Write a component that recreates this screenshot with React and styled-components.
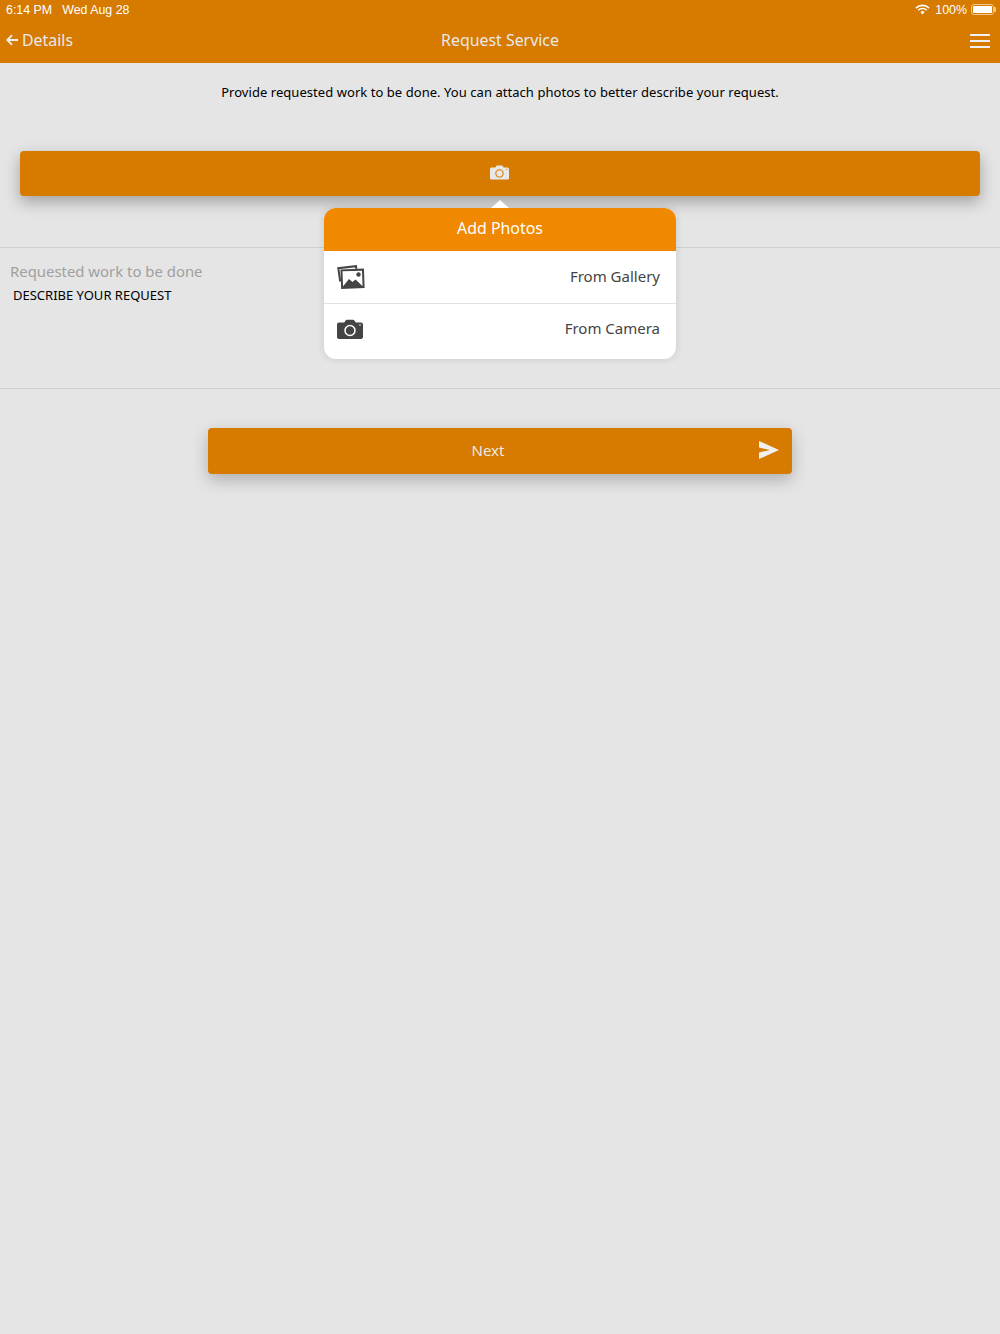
import React from 'react';
import styled, { createGlobalStyle } from 'styled-components';

const GlobalStyle = createGlobalStyle`
  html, body {
    margin: 0;
    padding: 0;
    background: #e5e5e5;
  }
  body {
    font-family: "Noto Sans", "Open Sans", sans-serif;
  }
`;

const CameraIcon = ({ size = 26, body = '#444', hole = '#fff' }) => (
  <svg width={size} height={size * 0.77} viewBox="0 0 26 20">
    <path
      d="M2 3.5h5.2L8.8 1.2C9 .9 9.300.7 9.700.7h6.600c.4 0 .7.2.9.5l1.600 2.300H24c1.100 0 2 .9 2 2V18c0 1.100-.9 2-2 2H2c-1.100 0-2-.9-2-2V5.500c0-1.100.9-2 2-2z"
      fill={body}
    />
    <circle cx="13" cy="11.500" r="5" fill="none" stroke={hole} strokeWidth="1.500" />
    <circle cx="23" cy="6" r="0.800" fill={hole} />
  </svg>
);

const GalleryIcon = () => (
  <svg width="28" height="24" viewBox="0 0 28 24">
    <path d="M3.200 16.500 1.300 3.200 19 1.200l.4 2.600" fill="none" stroke="#444" strokeWidth="2" />
    <rect x="4.800" y="5" width="21.500" height="17.500" fill="#fff" stroke="#444" strokeWidth="2" transform="rotate(-2 15 14)" />
    <path d="M5.500 22l6.500-8 3.500 3 3-2.500 8 7.500z" fill="#444" />
    <circle cx="21.500" cy="9.500" r="2.200" fill="#444" />
  </svg>
);

const App = () => (
  <Page>
    <GlobalStyle />
    <Header>
      <StatusBar>
        <StatusGroup>
          <span>6:14 PM</span>
          <span>Wed Aug 28</span>
        </StatusGroup>
        <BatteryGroup>
          <svg width="15" height="11" viewBox="0 0 16 11">
            <path d="M1 4a10 10 0 0 1 14 0" fill="none" stroke="#fff" strokeWidth="1.700" />
            <path d="M3.500 6.300a6.500 6.500 0 0 1 9 0" fill="none" stroke="#fff" strokeWidth="1.700" />
            <path d="M5.700 8.200a3.300 3.300 0 0 1 4.600 0L8 10.800z" fill="#fff" />
          </svg>
          <span>100%</span>
          <Battery><BatteryFill /></Battery>
        </BatteryGroup>
      </StatusBar>
      <NavBar>
        <BackLink>
          <svg width="12" height="12" viewBox="0 0 12 12">
            <path d="M6 1.200 1.300 6 6 10.800M1.500 6H12" fill="none" stroke="#f0f0f0" strokeWidth="1.800" />
          </svg>
          Details
        </BackLink>
        <NavTitle>Request Service</NavTitle>
        <MenuButton>
          <span /><span /><span />
        </MenuButton>
      </NavBar>
    </Header>

    <Intro>Provide requested work to be done. You can attach photos to better describe your request.</Intro>

    <PhotoSection>
      <PhotoButton>
        <CameraBump>
          <CameraIcon size={19} body="#e8e8e8" hole="#d67a00" />
        </CameraBump>
      </PhotoButton>
      <Popover>
        <PopoverArrow />
        <PopoverTitle>Add Photos</PopoverTitle>
        <PopoverRow>
          <GalleryIcon />
          <RowLabel>From Gallery</RowLabel>
        </PopoverRow>
        <PopoverRow $last>
          <CameraIcon />
          <RowLabel>From Camera</RowLabel>
        </PopoverRow>
      </Popover>
    </PhotoSection>

    <Field>
      <FieldLabel>Requested work to be done</FieldLabel>
      <FieldValue>DESCRIBE YOUR REQUEST</FieldValue>
    </Field>

    <NextButton>
      <NextLabel>Next</NextLabel>
      <SendIcon width="20" height="18" viewBox="0 0 20 18">
        <path d="M0 0 20 9 0 18V11.500L11 9 0 6.500z" fill="#f0f0f0" />
      </SendIcon>
    </NextButton>
  </Page>
);

export default App;

const Page = styled.div`
  min-height: 1334px;
  background: #e5e5e5;
  display: flex;
  flex-direction: column;
`;

const Header = styled.header`
  height: 63px;
  background: #d67a00;
  display: flex;
  flex-direction: column;
`;

const StatusBar = styled.div`
  height: 19px;
  padding: 0 6px;
  display: flex;
  align-items: center;
  justify-content: space-between;
  font-family: "Liberation Sans", Arial, sans-serif;
  font-size: 12.4px;
  color: #fff;
`;

const StatusGroup = styled.div`
  display: flex;
  gap: 10px;
`;

const BatteryGroup = styled.div`
  display: flex;
  align-items: center;
  gap: 5px;
`;

const Battery = styled.div`
  width: 23px;
  height: 11px;
  box-sizing: border-box;
  border: 1px solid #f0c98f;
  border-radius: 3px;
  padding: 1px;
  margin-left: -1px;
  position: relative;
  &::after {
    content: '';
    position: absolute;
    right: -3px;
    top: 2px;
    width: 2px;
    height: 5px;
    background: #f0c98f;
    border-radius: 0 1px 1px 0;
  }
`;

const BatteryFill = styled.div`
  height: 100%;
  background: #fff;
  border-radius: 1px;
`;

const NavBar = styled.div`
  flex: 1;
  padding: 0 10px 3px 6px;
  display: flex;
  align-items: center;
  justify-content: space-between;
  color: #e9e9e9;
  font-size: 15.9px;
`;

const BackLink = styled.div`
  display: flex;
  align-items: center;
  gap: 4px;
  width: 124px;
`;

const NavTitle = styled.div`
  text-align: center;
`;

const MenuButton = styled.div`
  width: 120px;
  padding-top: 3px;
  display: flex;
  flex-direction: column;
  align-items: flex-end;
  gap: 4px;
  span {
    display: block;
    width: 20px;
    height: 2px;
    background: #f0f0f0;
  }
`;

const Intro = styled.p`
  margin: 0;
  height: 88px;
  padding-top: 19px;
  box-sizing: border-box;
  text-align: center;
  font-size: 13px;
  letter-spacing: 0.05px;
  line-height: 20px;
  color: #000;
`;

const PhotoSection = styled.div`
  position: relative;
  height: 96px;
  box-sizing: border-box;
  padding: 0 20px;
`;

const PhotoButton = styled.div`
  height: 45px;
  background: #d67a00;
  border-radius: 4px;
  box-shadow: 0 6px 16px rgba(0, 0, 0, 0.3);
  display: flex;
  align-items: center;
  justify-content: center;
`;

const CameraBump = styled.div`
  display: flex;
  margin: -2px 1px 0 0;
`;

const Popover = styled.div`
  position: absolute;
  top: 57px;
  left: 324px;
  width: 352px;
  z-index: 2;
  background: #fff;
  border-radius: 12px;
  box-shadow: 0 0 8px rgba(0, 0, 0, 0.12);
`;

const PopoverArrow = styled.div`
  position: absolute;
  top: -8px;
  left: 167px;
  border-left: 9px solid transparent;
  border-right: 9px solid transparent;
  border-bottom: 8px solid #fff;
`;

const PopoverTitle = styled.div`
  height: 43px;
  padding-bottom: 3px;
  box-sizing: border-box;
  background: #f08800;
  border-radius: 12px 12px 0 0;
  color: #fff;
  font-size: 15.9px;
  display: flex;
  align-items: center;
  justify-content: center;
`;

const PopoverRow = styled.div`
  height: ${(p) => (p.$last ? '55px' : '53px')};
  box-sizing: border-box;
  padding: ${(p) => (p.$last ? '0 16px 5px 13px' : '0 16px 1px 13px')};
  display: flex;
  align-items: center;
  justify-content: space-between;
  border-bottom: ${(p) => (p.$last ? 'none' : '1px solid #e2e2e2')};
  color: #444;
  font-size: 15px;
`;

const RowLabel = styled.span`
  margin-top: -2px;
`;

const Field = styled.div`
  height: 142px;
  box-sizing: border-box;
  border-top: 1px solid #cfcfcf;
  border-bottom: 1px solid #cfcfcf;
  padding: 13px 10px 0;
`;

const FieldLabel = styled.div`
  font-size: 14.900px;
  line-height: 20px;
  color: #a0a0a0;
`;

const FieldValue = styled.div`
  margin-top: 4px;
  padding-left: 3px;
  font-size: 13px;
  line-height: 20px;
  color: #000;
`;

const NextButton = styled.div`
  position: relative;
  align-self: center;
  margin-top: 39px;
  width: 584px;
  height: 46px;
  background: #d67a00;
  border-radius: 4px;
  box-shadow: 0 6px 16px rgba(0, 0, 0, 0.24);
  box-sizing: border-box;
  padding: 0 13px 0 0;
  display: flex;
  align-items: center;
`;

const NextLabel = styled.div`
  flex: 1;
  text-align: center;
  color: #e9e9e9;
  font-size: 15px;
  padding-left: 9px;
  margin-top: -3px;
`;

const SendIcon = styled.svg`
  flex: none;
  margin-top: -2px;
`;
